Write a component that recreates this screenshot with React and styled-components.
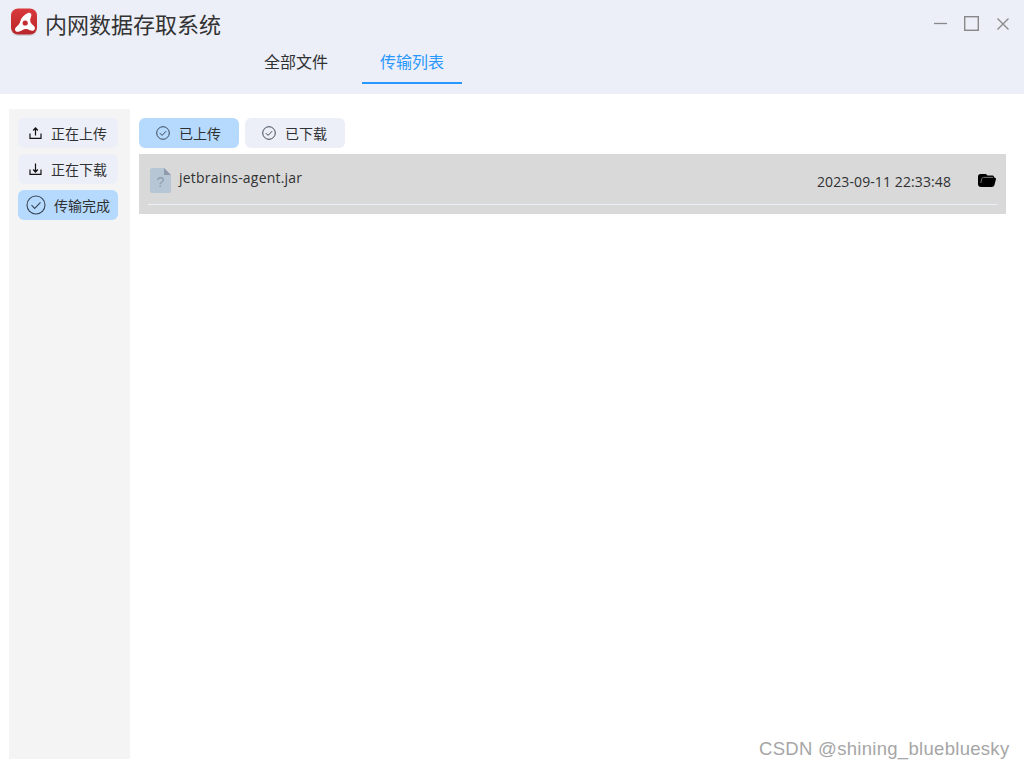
import React from 'react'
import styled, { createGlobalStyle } from 'styled-components'

const Global = createGlobalStyle`
html,body{
    margin:0;
    padding:0;
    background:#fff;
}
body{
    font-family:"Open Sans","Noto Sans CJK SC",sans-serif;
    color:#303133;
}
`
const Page = styled.div`
position:relative;
width:1024px;
height:768px;
overflow:hidden;
background:#fff;
`
const Header = styled.header`
height:94px;
background:#eceff7;
display:flex;
flex-direction:column;
`
const TitleBar = styled.div`
display:flex;
align-items:center;
height:48px;
padding:2px 13px 0 10px;
box-sizing:border-box;
`
const LogoBox = styled.div`
height:28px;
margin-top:-6px;
`
const Title = styled.h1`
margin:-2px 0 0 7px;
font-size:22px;
font-weight:400;
line-height:30px;
color:#333;
`
const WindowButtons = styled.div`
margin-left:auto;
margin-top:-2px;
display:flex;
align-items:center;
gap:15px;
color:#888;
`
const Nav = styled.nav`
display:flex;
gap:16px;
padding-left:246px;
height:36px;
`
const NavItem = styled.div`
width:100px;
height:38px;
box-sizing:border-box;
margin-top:-2px;
text-align:center;
font-size:16px;
line-height:32px;
color:${p => (p.$active ? '#2897ff' : '#303133')};
border-bottom:2px solid ${p => (p.$active ? '#2897ff' : 'transparent')};
`
const Body = styled.div`
display:flex;
gap:9px;
padding:15px 18px 9px 9px;
height:674px;
box-sizing:border-box;
`
const Sidebar = styled.aside`
width:121px;
flex-shrink:0;
background:#f4f4f4;
padding:9px;
box-sizing:border-box;
display:flex;
flex-direction:column;
gap:6px;
`
const SideButton = styled.div`
width:100px;
height:30px;
box-sizing:border-box;
display:flex;
align-items:center;
gap:${p => (p.$active ? '8px' : '9px')};
padding-left:${p => (p.$active ? '8px' : '11px')};
border-radius:6px;
font-size:14px;
color:#303133;
background:${p => (p.$active ? '#b5dafe' : '#eceff7')};
`
const Main = styled.main`
flex:1;
min-width:0;
padding-top:9px;
`
const Tabs = styled.div`
display:flex;
gap:6px;
margin-bottom:6px;
`
const Tab = styled.div`
width:100px;
height:30px;
box-sizing:border-box;
display:flex;
align-items:center;
gap:9px;
padding-left:17px;
border-radius:6px;
font-size:14px;
color:#303133;
background:${p => (p.$active ? '#b5dafe' : '#eceff7')};
`
const FileRow = styled.div`
height:60px;
background:#d9d9d9;
padding:0 9px;
box-sizing:border-box;
`
const FileRowInner = styled.div`
height:50px;
border-bottom:1px solid #ebeff7;
display:flex;
align-items:flex-start;
`
const FileName = styled.div`
margin-left:8px;
margin-top:14px;
font-size:14px;
line-height:20px;
letter-spacing:.21px;
color:#303133;
`
const FileTime = styled.div`
margin-left:auto;
margin-top:18px;
font-size:14px;
line-height:20px;
letter-spacing:.1px;
color:#303133;
`
const FileIconBox = styled.div`
margin-top:14px;
margin-left:2px;
height:25px;
`
const OpenButton = styled.div`
margin:20px 1px 0 27px;
height:13px;
`
const Watermark = styled.div`
position:absolute;
left:759px;
top:738px;
font-family:"Liberation Sans",sans-serif;
font-size:18.5px;
line-height:22px;
letter-spacing:.3px;
color:#a6a6a6;
white-space:nowrap;
`

const Logo = () => (
    <svg width="28" height="28" viewBox="0 0 28 28" style={{ display: 'block' }}>
        <defs>
            <linearGradient id="logoRed" x1="0" y1="0" x2="0" y2="1">
                <stop offset="0" stopColor="#d93a3c" />
                <stop offset="1" stopColor="#b8252b" />
            </linearGradient>
        </defs>
        <rect x="1" y="2" width="26" height="26" rx="7" fill="#cfd2d8" />
        <rect x="1" y="0.500" width="26" height="26" rx="7" fill="url(#logoRed)" />
        <path d="M18 5C20 4.300 21.800 5.800 21.300 7.800C20.800 9.800 19.800 11 20.300 13.200C20.800 15.400 22.500 16.600 24 18C25.800 19.700 24.800 22.800 22.300 22.800C20 22.800 18.800 21 16 21C13 21 11.500 23.200 8.500 23.800C5.600 24.300 4 21.800 5.600 19.800C7 18 8.800 17.200 9.800 14.800C10.800 12 11 10.500 13 8.500C14.500 7 16 5.800 18 5Z" fill="#fff" />
        <circle cx="15.200" cy="15" r="2.600" fill="#c22d32" />
    </svg>
)

const Minimize = () => (
    <svg width="16" height="16" viewBox="0 0 16 16"><path d="M1 7.500h13" stroke="currentColor" strokeWidth="1.300" fill="none" /></svg>
)
const Maximize = () => (
    <svg width="16" height="16" viewBox="0 0 16 16"><rect x="0.700" y="0.700" width="13.600" height="13.600" fill="none" stroke="currentColor" strokeWidth="1.400" /></svg>
)
const CloseIcon = () => (
    <svg width="16" height="16" viewBox="0 0 16 16"><path d="M2.500 2.500l11 11M13.500 2.500l-11 11" stroke="currentColor" strokeWidth="1.300" fill="none" /></svg>
)

const Upload = () => (
    <svg width="13" height="13" viewBox="0 0 13 13" fill="none" stroke="#111" strokeWidth="1.200">
        <path d="M6.500 8.500V1.200M4.200 3.500l2.300-2.500 2.300 2.500M1 6.500v4.900h11V6.500" />
    </svg>
)
const Download = () => (
    <svg width="13" height="13" viewBox="0 0 13 13" fill="none" stroke="#111" strokeWidth="1.200">
        <path d="M6.500 .5v8M4.200 6.500l2.300 2.500 2.300-2.500M1 6.500v4.900h11V6.500" />
    </svg>
)
const Check = ({ size }) => (
    <svg width={size} height={size} viewBox="0 0 20 20" fill="none" stroke="#3a4454" strokeWidth={size > 16 ? 1.1 : 1.400}>
        <circle cx="10" cy="10" r="9" />
        <path d="M5.500 10.200l3.200 3.200 5.800-6" />
    </svg>
)
const UnknownFile = () => (
    <svg width="21" height="25" viewBox="0 0 21 25">
        <path d="M2 0h12l7 7v16a2 2 0 0 1-2 2H2a2 2 0 0 1-2-2V2a2 2 0 0 1 2-2z" fill="#b7c6d5" />
        <path d="M14 0l7 7h-7z" fill="#8e9bab" />
        <text x="10.500" y="19" textAnchor="middle" fontSize="14" fill="#8e9dad" fontFamily="Liberation Sans">?</text>
    </svg>
)
const FolderOpen = () => (
    <svg width="18" height="13" viewBox="0 0 18 13" style={{ display: 'block' }}>
        <path d="M2.500 0H8l1.500 1.500H14C15.500 1.500 16 2.200 16 3.200L17.500 4C18 4.300 18 4.800 17.900 5.500L16.500 10.800C16.100 12.200 15.200 13 13.800 13H3C1.200 13 0 11.800 0 10V2.500C0 1 1 0 2.500 0Z" fill="#000" />
        <path d="M2.800 9L3.600 5.200C3.800 4 4.500 3.400 5.700 3.400H15" fill="none" stroke="#777" strokeWidth="1" />
    </svg>
)

function App() {
    return (
        <Page>
            <Global />
            <Header>
                <TitleBar>
                    <LogoBox><Logo /></LogoBox>
                    <Title>内网数据存取系统</Title>
                    <WindowButtons>
                        <Minimize />
                        <Maximize />
                        <CloseIcon />
                    </WindowButtons>
                </TitleBar>
                <Nav>
                    <NavItem>全部文件</NavItem>
                    <NavItem $active>传输列表</NavItem>
                </Nav>
            </Header>
            <Body>
                <Sidebar>
                    <SideButton><Upload />正在上传</SideButton>
                    <SideButton><Download />正在下载</SideButton>
                    <SideButton $active><Check size={20} />传输完成</SideButton>
                </Sidebar>
                <Main>
                    <Tabs>
                        <Tab $active><Check size={14} />已上传</Tab>
                        <Tab><Check size={14} />已下载</Tab>
                    </Tabs>
                    <FileRow>
                        <FileRowInner>
                            <FileIconBox><UnknownFile /></FileIconBox>
                            <FileName>jetbrains-agent.jar</FileName>
                            <FileTime>2023-09-11 22:33:48</FileTime>
                            <OpenButton><FolderOpen /></OpenButton>
                        </FileRowInner>
                    </FileRow>
                </Main>
            </Body>
            <Watermark>CSDN @shining_bluebluesky</Watermark>
        </Page>
    )
}

export default App
